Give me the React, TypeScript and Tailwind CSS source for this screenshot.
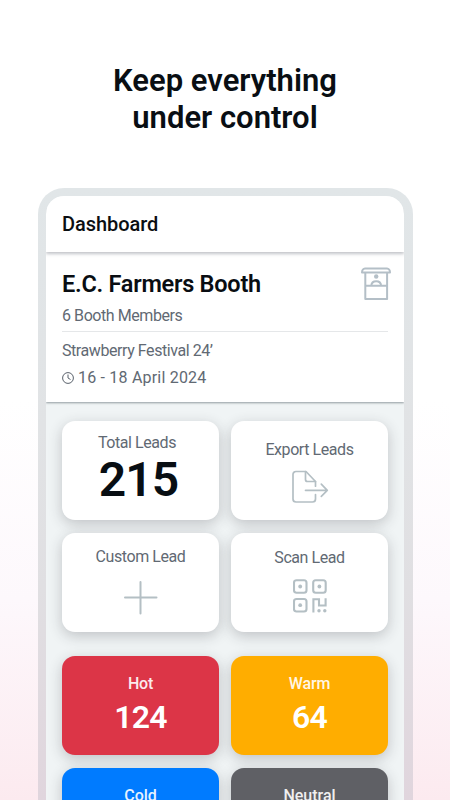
import React from "react";

const cardShadow = "shadow-[0_4px_14px_rgba(40,40,50,0.24)]";

function BoothIcon() {
  return (
    <svg width="30" height="34" viewBox="0 0 30 34" fill="none" stroke="#b4bfc7" strokeWidth="2" strokeLinejoin="round">
      <path d="M4 1.500h22c1.700 0 3 1.800 3 3.900H1c0-2.100 1.300-3.900 3-3.900Z" />
      <path d="M4.300 5.400v26.500h21.800V5.400M4.300 18.800h21.800" />
      <circle cx="15.200" cy="9.500" r="2.200" fill="#b4bfc7" stroke="none" />
      <path d="M10.300 18.800c.2-3 2.200-4.500 4.900-4.500s4.700 1.500 4.900 4.500" />
    </svg>
  );
}

function ExportIcon() {
  return (
    <svg width="38" height="34" viewBox="0 0 38 34" fill="none" stroke="#b4bfc4" strokeWidth="1.700" strokeLinecap="round" strokeLinejoin="round">
      <path d="M24.500 16.200v-4.700L15 1.500H5A3 3 0 0 0 2 4.500v24.500a3 3 0 0 0 3 3h16.500a3 3 0 0 0 3-3V24.500" />
      <path d="M14.500 1.500V9.500a2 2 0 0 0 2 2H24.500M14.500 20.300h21.800M30.300 14.200l6 6.100-6 6.100" />
    </svg>
  );
}

function QrIcon() {
  return (
    <svg width="34" height="34" viewBox="0 0 34 34" fill="none" stroke="#b4bfc4" strokeWidth="2.100">
      <rect x="1" y="1.300" width="12.500" height="12.500" rx="2.500" />
      <rect x="20.200" y="1.300" width="12.500" height="12.500" rx="2.500" />
      <rect x="1" y="20" width="12.500" height="12.500" rx="2.500" />
      <path d="M20.400 33.500V20.200H26v6.300h6.600V19.200" />
      <g fill="#b4bfc4" stroke="none">
        <circle cx="7.200" cy="7.500" r="1.900" />
        <circle cx="26.400" cy="7.500" r="1.900" />
        <circle cx="7.200" cy="26.200" r="1.900" />
        <circle cx="26" cy="31.800" r="1.700" />
        <circle cx="31.800" cy="31.800" r="1.700" />
      </g>
    </svg>
  );
}

function Card({ className, children }: { className: string; children: React.ReactNode }) {
  return (
    <div className={`flex h-[99px] flex-col items-center rounded-[13px] whitespace-nowrap ${cardShadow} ${className}`}>
      {children}
    </div>
  );
}

export default function App() {
  return (
    <main className="flex h-[800px] w-[450px] flex-col overflow-hidden bg-[linear-gradient(to_bottom,#fff_0px,#fff_400px,#fdf8fc_600px,#fceaef_800px)] font-[Roboto,sans-serif]">
      <h1 className="h-[188px] shrink-0 pt-[63px] text-center text-[31px] leading-[36.600px] font-semibold text-[#090e13]">
        Keep everything
        <br />
        under control
      </h1>

      <div className="mx-[37.500px] h-[700px] shrink-0 rounded-t-[26px] bg-[linear-gradient(to_bottom,#e1e6e8_0px,#e1e3e5_240px,#e0dfe2_400px,#e0d5dd_612px)] px-[8.500px] pt-2">
        <div className="flex h-full flex-col overflow-hidden rounded-t-[18px] bg-[#f0f4f5]">
          <header className="relative z-10 h-14 shrink-0 bg-white pt-[16px] pl-4 text-[20px] leading-6 font-medium tracking-[-0.050px] text-[#0b0e12] shadow-[0_2px_3px_rgba(120,125,135,0.45)]">
            Dashboard
          </header>

          <section className="h-[149.500px] shrink-0 bg-white px-4 pt-[15px] whitespace-nowrap text-[#616973] shadow-[0_1px_2px_rgba(70,80,90,0.550)]">
            <div className="flex h-[65px] justify-between border-b border-[#e5e7e9]">
              <div>
                <h2 className="mt-[2px] text-[23.500px] leading-[30px] font-semibold tracking-[-0.250px] text-[#090d12]">E.C. Farmers Booth</h2>
                <p className="mt-[7px] text-[16px] leading-5 tracking-[-0.430px]">6 Booth Members</p>
              </div>
              <div className="-mr-[3px]"><BoothIcon /></div>
            </div>
            <p className="mt-[9px] text-[16px] leading-5 tracking-[-0.430px]">Strawberry Festival 24’</p>
            <p className="mt-[7px] flex items-center text-[16px] leading-5 tracking-[0.200px]">
              <svg className="mr-[4px]" width="12" height="12" viewBox="0 0 12 12" fill="none" stroke="#59616b">
                <circle cx="6" cy="6" r="5.400" />
                <path d="M6 2.500V6l2.500 1.500" />
              </svg>
              16 - 18 April 2024
            </p>
          </section>

          <section className="grid grid-cols-2 gap-x-3 gap-y-[13px] px-4 pt-[19.500px] text-[16px] leading-5 tracking-[-0.430px] text-[#616973]">
            <Card className="bg-white pt-3">
              <p className="mr-[7px]">Total Leads</p>
              <strong className="mt-[1px] mr-[4px] text-[48px] leading-[52px] font-semibold tracking-[-0.900px] text-[#080e13]">215</strong>
            </Card>
            <Card className="bg-white pt-[19px]">
              <p>Export Leads</p>
              <div className="mt-[10px]"><ExportIcon /></div>
            </Card>
            <Card className="bg-white pt-[14px]">
              <p>Custom Lead</p>
              <svg className="mt-[14px]" width="34" height="34" viewBox="0 0 34 34" stroke="#b4bfc4" strokeWidth="2" strokeLinecap="round">
                <path d="M16.500 1v31.500M1 16.500h31.500" />
              </svg>
            </Card>
            <Card className="bg-white pt-[15px]">
              <p>Scan Lead</p>
              <div className="mt-[11px]"><QrIcon /></div>
            </Card>
          </section>

          <section className="mt-[24px] grid grid-cols-2 gap-x-3 gap-y-[13px] px-4 text-[16px] leading-5 font-medium text-white">
            <Card className="bg-[#dc3547] pt-[18px]">
              <p className="tracking-[-0.200px] opacity-90">Hot</p>
              <strong className="mt-1 text-[32px] leading-[38px] font-semibold tracking-[-0.700px]">124</strong>
            </Card>
            <Card className="bg-[#ffad00] pt-[18px]">
              <p className="tracking-[-0.100px] opacity-90">Warm</p>
              <strong className="mt-1 text-[32px] leading-[38px] font-semibold tracking-[-0.700px]">64</strong>
            </Card>
            <Card className="bg-[#007bff] pt-[18px]">
              <p className="opacity-90">Cold</p>
            </Card>
            <Card className="bg-[#5f6065] pt-[18px]">
              <p className="opacity-90">Neutral</p>
            </Card>
          </section>
        </div>
      </div>
    </main>
  );
}
